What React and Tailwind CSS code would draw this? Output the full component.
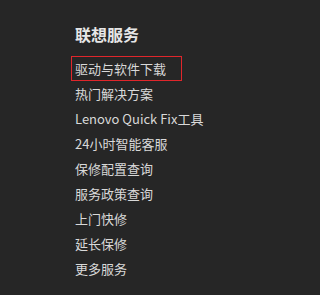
import React from 'react'

const LINKS = [
  '驱动与软件下载',
  '热门解决方案',
  'Lenovo Quick Fix工具',
  '24小时智能客服',
  '保修配置查询',
  '服务政策查询',
  '上门快修',
  '延长保修',
  '更多服务',
]

const App = () => {
  return (
    <div
      className="w-full min-h-[295px] bg-[#262626] pl-[71px] pt-[24px]"
      style={{ fontFamily: '"Noto Sans CJK SC", "Noto Sans", sans-serif' }}
    >
      <h3 className="pl-[4px] text-[16px] leading-[20px] font-bold text-[#e6e6e6] mb-[12px]">
        联想服务
      </h3>
      <ul className="flex flex-col">
        {LINKS.map((label, index) => (
          <li key={label}>
            <a
              href="#"
              className={
                index === 0
                  ? 'flex items-center h-[25px] w-[111px] px-[3px] border border-[#e0262b] text-[13px] text-[#d9d9d9] whitespace-nowrap'
                  : 'flex items-center h-[25px] w-[111px] px-[3px] border border-transparent text-[13px] text-[#d9d9d9] whitespace-nowrap'
              }
            >
              {label}
            </a>
          </li>
        ))}
      </ul>
    </div>
  )
}

export default App
